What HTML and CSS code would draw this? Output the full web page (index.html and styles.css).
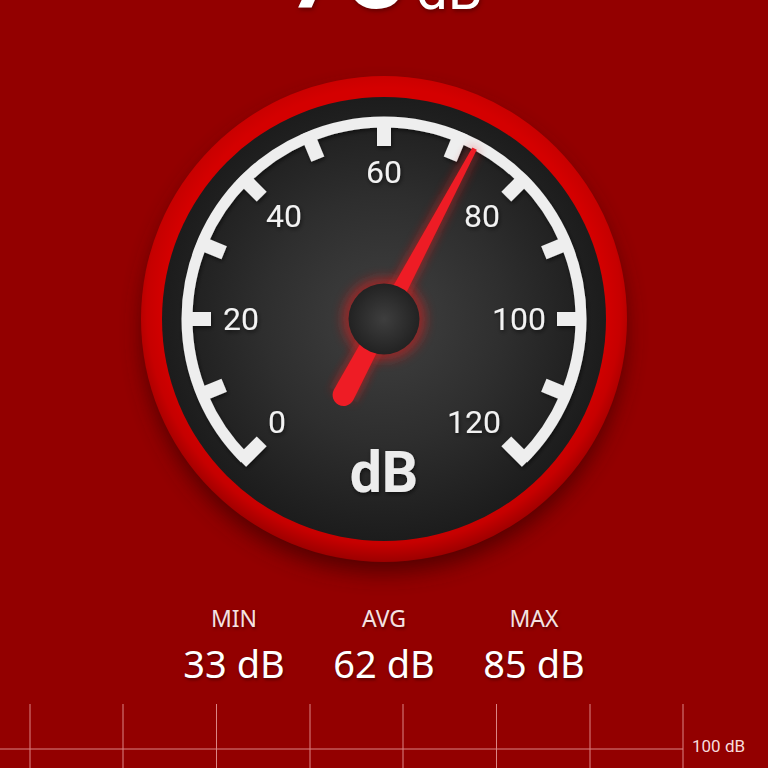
FILE: index.html
```html
<!DOCTYPE html>
<html lang="en">
<head>
 <meta charset="UTF-8">
 <title>Sound Meter</title>
 <link rel="stylesheet" href="styles.css">
</head>
<body>
<div class="page">

 <div class="reading">
  <span class="readingNum">73</span>
  <span class="readingUnit">dB</span>
 </div>

 <svg class="gauge" viewBox="-280 -280 560 560" width="560" height="560">
  <defs>
   <radialGradient id="faceGrad" cx="0" cy="0" r="222" gradientUnits="userSpaceOnUse">
    <stop offset="0" stop-color="#404040"/>
    <stop offset="0.55" stop-color="#2e2e2e"/>
    <stop offset="1" stop-color="#1c1c1c"/>
   </radialGradient>
   <radialGradient id="ringGrad" cx="0" cy="-12" r="255" gradientUnits="userSpaceOnUse">
    <stop offset="0.86" stop-color="#d40000"/>
    <stop offset="0.93" stop-color="#c60000"/>
    <stop offset="1" stop-color="#9c0000"/>
   </radialGradient>
   <radialGradient id="hubGrad" cx="0.5" cy="0.5" r="0.5">
    <stop offset="0" stop-color="#3e3e3e"/>
    <stop offset="1" stop-color="#222"/>
   </radialGradient>
   <filter id="ringShadow" x="-20%" y="-20%" width="140%" height="140%">
    <feGaussianBlur stdDeviation="11"/>
   </filter>
   <filter id="glow" x="-50%" y="-50%" width="200%" height="200%">
    <feGaussianBlur stdDeviation="6"/>
   </filter>
   <filter id="softShadow" x="-10%" y="-10%" width="120%" height="120%">
    <feDropShadow dx="1" dy="2" stdDeviation="2" flood-color="#000" flood-opacity="0.55"/>
   </filter>
  </defs>

  <circle class="ringShadow" cx="0" cy="12" r="241" filter="url(#ringShadow)"/>
  <circle cx="0" cy="0" r="243" fill="url(#ringGrad)"/>
  <circle cx="0" cy="0" r="222" fill="url(#faceGrad)"/>

  <g class="scale" filter="url(#softShadow)">
   <path class="scaleArc" d="M -139.3 139.3 A 197 197 0 1 1 139.3 139.3"/>
   <rect class="tick" x="-7" y="-202" width="14" height="29" transform="rotate(-135)"/>
   <rect class="tick" x="-7" y="-202" width="14" height="29" transform="rotate(-112.5)"/>
   <rect class="tick" x="-7" y="-202" width="14" height="29" transform="rotate(-90)"/>
   <rect class="tick" x="-7" y="-202" width="14" height="29" transform="rotate(-67.5)"/>
   <rect class="tick" x="-7" y="-202" width="14" height="29" transform="rotate(-45)"/>
   <rect class="tick" x="-7" y="-202" width="14" height="29" transform="rotate(-22.5)"/>
   <rect class="tick" x="-7" y="-202" width="14" height="29"/>
   <rect class="tick" x="-7" y="-202" width="14" height="29" transform="rotate(22.5)"/>
   <rect class="tick" x="-7" y="-202" width="14" height="29" transform="rotate(45)"/>
   <rect class="tick" x="-7" y="-202" width="14" height="29" transform="rotate(67.5)"/>
   <rect class="tick" x="-7" y="-202" width="14" height="29" transform="rotate(90)"/>
   <rect class="tick" x="-7" y="-202" width="14" height="29" transform="rotate(112.5)"/>
   <rect class="tick" x="-7" y="-202" width="14" height="29" transform="rotate(135)"/>
  </g>

  <g class="labels" filter="url(#softShadow)">
   <text class="label" x="-107" y="114">0</text>
   <text class="label" x="-143" y="11">20</text>
   <text class="label" x="-100" y="-92">40</text>
   <text class="label" x="0" y="-136">60</text>
   <text class="label" x="98" y="-92">80</text>
   <text class="label" x="135" y="11">100</text>
   <text class="label" x="90" y="114">120</text>
   <text class="unit" x="0" y="173">dB</text>
  </g>

  <circle class="hubGlow" cx="0" cy="0" r="41" filter="url(#glow)"/>
  <g transform="rotate(28)">
   <path class="needleGlow" d="M -2.5 -193 L 2.500 -193 L 11 86 L -11 86 Z" filter="url(#glow)"/>
   <path class="needle" d="M -2.5 -193 L 2.500 -193 L 11 86 A 11 11 0 0 1 -11 86 Z"/>
  </g>
  <circle cx="0" cy="0" r="35.500" fill="url(#hubGrad)"/>
 </svg>

 <div class="stats">
  <div class="stat">
   <div class="statLabel">MIN</div>
   <div class="statValue">33 dB</div>
  </div>
  <div class="stat">
   <div class="statLabel">AVG</div>
   <div class="statValue">62 dB</div>
  </div>
  <div class="stat">
   <div class="statLabel">MAX</div>
   <div class="statValue">85 dB</div>
  </div>
 </div>

 <div class="chart">
  <svg class="chartGrid" viewBox="0 0 684 64" width="684" height="64">
   <line x1="30" y1="0" x2="30" y2="64"/>
   <line x1="123" y1="0" x2="123" y2="64"/>
   <line x1="216.500" y1="0" x2="216.500" y2="64"/>
   <line x1="310" y1="0" x2="310" y2="64"/>
   <line x1="403" y1="0" x2="403" y2="64"/>
   <line x1="496.500" y1="0" x2="496.500" y2="64"/>
   <line x1="590" y1="0" x2="590" y2="64"/>
   <line x1="683" y1="0" x2="683" y2="64"/>
   <line x1="0" y1="45" x2="683" y2="45"/>
  </svg>
  <span class="chartLabel">100 dB</span>
 </div>

</div>
</body>
</html>
```

FILE: styles.css
```css
body{
 margin: 0;
 background-color: #930000;
 font-family: Roboto, "Liberation Sans", sans-serif;
}

.page{
 display: flex;
 flex-direction: column;
 width: 768px;
 height: 768px;
 overflow: hidden;
 background-color: #930000;
}

/* the big reading is cut by the top edge, only its lower part shows */
.reading{
 display: flex;
 align-items: flex-end;
 justify-content: center;
 gap: 8px;
 height: 10px;
 color: #fff;
 flex-shrink: 0;
 text-shadow: 1px 2px 4px rgba(60, 0, 0, 0.6);
}

.readingNum{
 font-size: 108px;
 line-height: 108px;
 margin-bottom: -15px;
 font-weight: 500;
 flex-shrink: 0;
}

.readingUnit{
 font-size: 56px;
 line-height: 56px;
 margin-bottom: -8px;
 font-weight: 400;
 flex-shrink: 0;
}

.gauge{
 display: block;
 flex-shrink: 0;
 margin: 29px auto 0;
}

.ringShadow{
 fill: #3c0000;
 opacity: 0.75;
}

.scaleArc{
 fill: none;
 stroke: #eeeeee;
 stroke-width: 11;
}

.tick{
 fill: #eeeeee;
}

.label{
 fill: #f2f2f2;
 font-size: 32px;
 text-anchor: middle;
}

.unit{
 fill: #ececec;
 font-size: 57px;
 font-weight: 700;
 text-anchor: middle;
}

.hubGlow{
 fill: #d81a1a;
 opacity: 0.6;
}

.needle{
 fill: #ee1c25;
}

.needleGlow{
 fill: #e01a1a;
 opacity: 0.8;
}

.stats{
 display: grid;
 grid-template-columns: repeat(3, 150px);
 justify-content: center;
 margin-top: 3px;
 color: #fff;
 font-family: "Noto Sans", Roboto, sans-serif;
 text-align: center;
 text-shadow: 1px 2px 3px rgba(60, 0, 0, 0.6);
}

.statLabel{
 font-size: 23px;
 line-height: 32px;
 color: #f5e2e2;
}

.statValue{
 font-size: 38px;
 line-height: 50px;
 margin-top: 4px;
}

.chart{
 display: flex;
 align-items: flex-start;
 margin-top: 16px;
 flex-shrink: 0;
}

.chartGrid{
 display: block;
 flex-shrink: 0;
}

.chartGrid line{
 stroke: #db8585;
 stroke-width: 1;
}

.chartLabel{
 margin: 32px 0 0 8px;
 font-size: 17px;
 line-height: 20px;
 color: #f7dcdc;
}
```
